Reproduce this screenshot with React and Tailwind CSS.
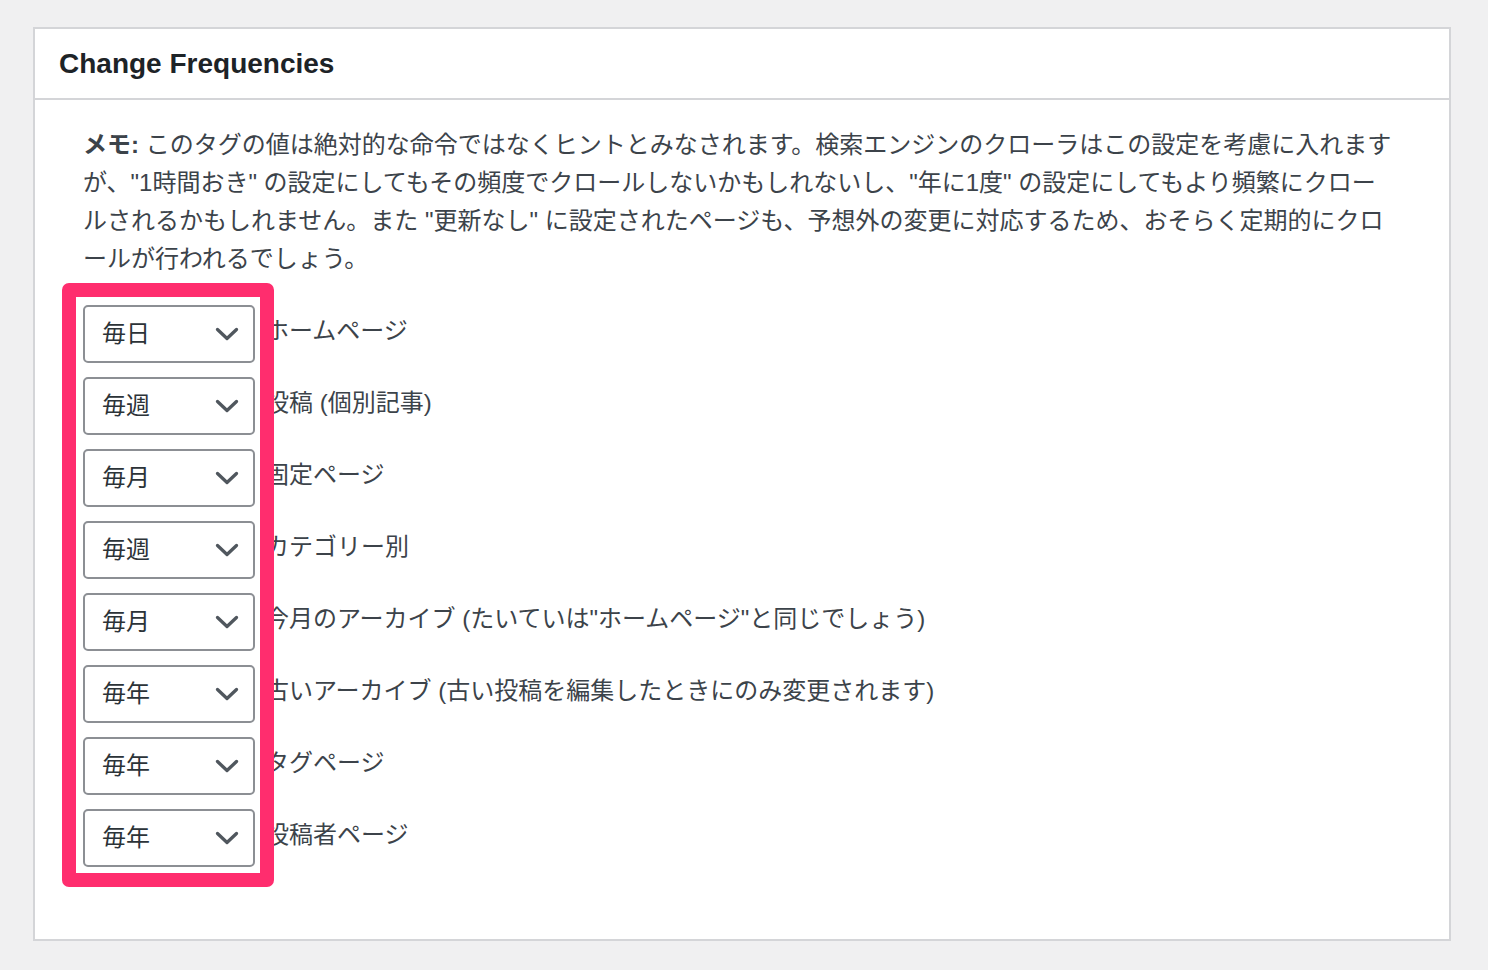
import React from "react";

const rows = [
  ["毎日", "ホームページ"],
  ["毎週", "投稿 (個別記事)"],
  ["毎月", "固定ページ"],
  ["毎週", "カテゴリー別"],
  ["毎月", '今月のアーカイブ (たいていは"ホームページ"と同じでしょう)'],
  ["毎年", "古いアーカイブ (古い投稿を編集したときにのみ変更されます)"],
  ["毎年", "タグページ"],
  ["毎年", "投稿者ページ"],
];

function Chevron() {
  return (
    <svg width="24" height="14" viewBox="0 0 24 14" fill="none" className="shrink-0">
      <path d="M2.5 2.5 L12 11.5 L21.5 2.5" stroke="#50575e" strokeWidth="3.3" strokeLinecap="round" strokeLinejoin="round" />
    </svg>
  );
}

export default function App() {
  const font = { fontFamily: '"Liberation Sans", "Noto Sans CJK JP", sans-serif' };
  return (
    <div className="min-h-[970px] w-[1488px] bg-[#f0f0f1] pt-[27px] pl-[33px]" style={font}>
      <div className="w-[1418px] h-[914px] bg-white border-2 border-[#d4d5d8]">
        <div className="h-[71px] border-b-2 border-[#d4d5d8] flex items-center pl-[24px]">
          <h2 className="text-[28px] font-bold text-[#1d2327] leading-none">Change Frequencies</h2>
        </div>
        <div className="pl-[48px] pt-[26px]">
          <p className="text-[24px] leading-[38px] text-[#3c434a]">
            <span className="block whitespace-nowrap">
              <b className="font-bold">メモ:</b> このタグの値は絶対的な命令ではなくヒントとみなされます。検索エンジンのクローラはこの設定を考慮に入れます
            </span>
            <span className="block whitespace-nowrap">
              が、"1時間おき" の設定にしてもその頻度でクロールしないかもしれないし、"年に1度" の設定にしてもより頻繁にクロー
            </span>
            <span className="block whitespace-nowrap">
              ルされるかもしれません。また "更新なし" に設定されたページも、予想外の変更に対応するため、おそらく定期的にクロ
            </span>
            <span className="block whitespace-nowrap">ールが行われるでしょう。</span>
          </p>
          <div className="relative mt-[27px] flex flex-col gap-[14px]">
            {rows.map(([val, label], i) => (
              <div key={i} className="flex items-center gap-[10px]">
                <div className="w-[172px] h-[58px] border-2 border-[#8c8f94] rounded-[5px] flex items-center justify-between pl-[17px] pr-[14px] text-[24px] text-[#2c3338]">
                  <span>{val}</span>
                  <Chevron />
                </div>
                <span className="text-[24px] text-[#3c434a] pb-[6px] whitespace-nowrap">{label}</span>
              </div>
            ))}
            <div className="absolute left-[-21px] top-[-22px] w-[212px] h-[604px] border-[14px] border-[#ff2d6e] rounded-[7px] pointer-events-none" />
          </div>
        </div>
      </div>
    </div>
  );
}
